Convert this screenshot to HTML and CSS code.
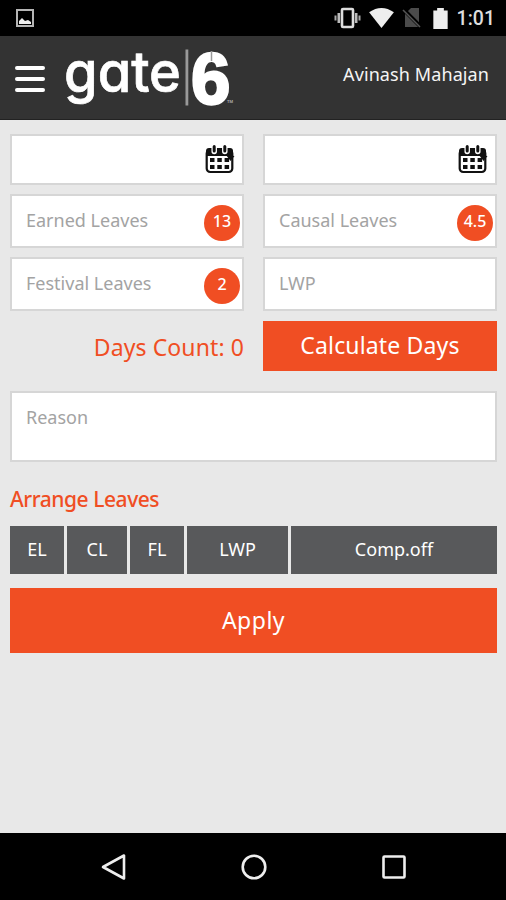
FILE: index.html
```html
<!DOCTYPE html>
<html lang="en">
  <head>
    <meta charset="utf-8">
    <title>Apply Leave</title>
    <link rel="stylesheet" href="styles.css">
  </head>
  <body>
    <div class="status-bar">
      <svg class="icon-picture" width="18" height="18" viewBox="0 0 18 18">
        <rect x="1" y="1" width="16" height="16" fill="none" stroke="#b5b5b5" stroke-width="2"/>
        <path d="M3 15v-3l3-3 3 3 3-1 3 2v2z" fill="#eee"/>
      </svg>
      <div class="status-icons">
        <svg width="27" height="22" viewBox="0 0 27 22">
          <rect x="8" y="2" width="11" height="18" rx="1" fill="none" stroke="#ddd" stroke-width="2.6"/>
          <path d="M4.8 6v10M22.2 6v10" stroke="#bbb" stroke-width="2.6"/>
          <path d="M1.5 8.500v5M25.500 8.500v5" stroke="#aaa" stroke-width="2"/>
        </svg>
        <svg class="icon-wifi" width="25" height="20" viewBox="0 0 26 21">
          <path d="M0 4.500Q13-4.500 26 4.500L13 21z" fill="#eee"/>
        </svg>
        <svg class="icon-sim" width="20" height="22" viewBox="0 0 20 22">
          <path d="M3 7l6-6h8v19H3z" fill="#4b4b4b"/>
          <path d="M1 2l18 18" stroke="#000" stroke-width="4"/>
          <path d="M1 3l17 17" stroke="#555" stroke-width="1.600"/>
        </svg>
        <svg class="icon-battery" width="15" height="21" viewBox="0 0 15 22">
          <path d="M0 2.500h4V0h7v2.500h4V22H0z" fill="#eee"/>
        </svg>
        <span class="clock">1:01</span>
      </div>
    </div>

    <header class="header">
      <div class="menu"><span></span><span></span><span></span></div>
      <svg class="logo" width="174" height="82" viewBox="-3 -9 174 82">
        <text class="logo-gate" x="-1" y="46" textLength="117" lengthAdjust="spacingAndGlyphs">gate</text>
        <rect x="120.500" y="3.500" width="2.800" height="56" fill="#999"/>
        <text class="logo-six" transform="translate(126 58) scale(.97 1)">6</text>
        <path d="M146.500 5v10" stroke="#999" stroke-width="1.500"/>
        <text class="logo-tm" x="162" y="57">TM</text>
      </svg>
      <span class="user">Avinash Mahajan</span>
    </header>

    <main class="content">
      <div class="fields">
        <div class="field date">
          <svg class="calendar" width="30" height="29" viewBox="0 0 30 29"><use href="#cal"/></svg>
        </div>
        <div class="field date">
          <svg class="calendar" width="30" height="29" viewBox="0 0 30 29">
            <g id="cal">
              <rect x="1.700" y="5" width="25.600" height="22" rx="3.500" fill="#fff" stroke="#111" stroke-width="2.200"/>
              <path d="M1 11V6q0-3 3-3h21q3 0 3 3v5z" fill="#111"/>
              <path d="M9.200 2v4.500M19.800 2v4.500" stroke="#fff" stroke-width="5.500" stroke-linecap="round"/>
              <path d="M9.200 1.500v4.500M19.800 1.500v4.500" stroke="#111" stroke-width="3" stroke-linecap="round"/>
              <path d="M5 13h4.500v4H5zM12.300 13h4.500v4h-4.500zM19.600 13h4.500v4h-4.500zM5 20h4.500v4H5zM12.300 20h4.500v4h-4.500zM19.600 20h4.500v4h-4.500z" fill="#111"/>
              <path d="M21 10l8.500 1-4 5z" fill="#111"/>
            </g>
          </svg>
        </div>
        <div class="field">Earned Leaves <span class="badge">13</span></div>
        <div class="field">Causal Leaves <span class="badge">4.5</span></div>
        <div class="field">Festival Leaves <span class="badge">2</span></div>
        <div class="field">LWP</div>
        <div class="days-count">Days Count: 0</div>
        <button class="calculate">Calculate Days</button>
      </div>

      <div class="field reason">Reason</div>

      <h2>Arrange Leaves</h2>
      <div class="types">
        <button>EL</button>
        <button>CL</button>
        <button>FL</button>
        <button>LWP</button>
        <button>Comp.off</button>
      </div>
      <button class="apply">Apply</button>
    </main>

    <nav class="nav-bar">
      <svg width="28" height="30" viewBox="0 0 28 30"><path d="M24 3.500v23L3 15z"/></svg>
      <svg width="28" height="30" viewBox="0 0 28 30"><circle cx="14" cy="15" r="11.300"/></svg>
      <svg width="28" height="30" viewBox="0 0 28 30"><rect x="3.500" y="4.500" width="21" height="21" rx="1"/></svg>
    </nav>
  </body>
</html>
```
FILE: styles.css
```css
:root {
  --orange: #f04e23;
  --bg: #e8e8e8;
  --dark: #333333;
  --grey: #58595b;
  --border: #d6d6d6;
}

* {
  box-sizing: border-box;
}

body {
  margin: 0;
  height: 900px;
  display: flex;
  flex-direction: column;
  background: var(--bg);
  font-family: "Noto Sans", "Open Sans", sans-serif;
  overflow: hidden;
}

button {
  border: none;
  padding: 0 0 2px;
  color: #fff;
  font-family: inherit;
}

/* Status bar */
.status-bar {
  height: 36px;
  padding: 0 11px 0 16px;
  background: #000;
  display: flex;
  align-items: center;
  justify-content: space-between;
}

.status-icons {
  display: flex;
  align-items: center;
}

.icon-wifi {
  margin-left: 8px;
}

.icon-sim {
  margin-left: 8px;
}

.icon-battery {
  margin-left: 11px;
}

.clock {
  margin-left: 9px;
  color: #ddd;
  font: 500 19.5px/36px Roboto, sans-serif;
  padding-top: 2px;
}

/* Header */
.header {
  height: 84px;
  padding: 0 17px 0 15px;
  background: var(--dark);
  border-bottom: 1px solid #222;
  display: flex;
  align-items: center;
}

.menu {
  display: flex;
  flex-direction: column;
  gap: 7px;
  margin-top: 3px;
}

.menu span {
  width: 30px;
  height: 4px;
  border-radius: 2px;
  background: #fff;
}

.logo {
  margin-left: 17px;
  fill: #fff;
}

.logo-gate {
  font: 500 56px Inter, sans-serif;
  font-feature-settings: "cv11";
  stroke: #fff;
  stroke-width: 0.7;
}

.logo-six {
  font: 700 73px "Liberation Sans", sans-serif;
  stroke: #fff;
  stroke-width: 2.5;
}

.logo-tm {
  font: 700 4px Roboto, sans-serif;
  fill: #aaa;
}

.user {
  margin: -8px 0 0 auto;
  color: #f5f5f5;
  font-size: 18px;
  letter-spacing: 0.1px;
}

/* Leave form */
.content {
  flex: 1;
  padding: 14px 9px 0 10px;
}

.fields {
  display: grid;
  grid-template-columns: 1fr 1fr;
  grid-template-rows: 51px 54px 54px 51px;
  gap: 9px 19px;
}

.field {
  display: flex;
  align-items: center;
  justify-content: space-between;
  padding: 0 2px 3px 14px;
  background: #fff;
  border: 2px solid var(--border);
  color: #a3a3a3;
  font-size: 18px;
}

.date {
  justify-content: flex-end;
  padding: 0 7px 0 0;
}

.badge {
  width: 36px;
  height: 36px;
  margin-top: 6px;
  border-radius: 50%;
  background: var(--orange);
  color: #fff;
  font-size: 16px;
  font-weight: 500;
  line-height: 33px;
  text-align: center;
}

.days-count {
  color: var(--orange);
  font-size: 23px;
  line-height: 55px;
  letter-spacing: 0.1px;
  text-align: right;
}

.calculate {
  margin-top: 1px;
  background: var(--orange);
  font-size: 23px;
  letter-spacing: 0.15px;
}

.reason {
  height: 71px;
  margin-top: 20px;
  padding-top: 12px;
  align-items: flex-start;
}

h2 {
  margin: 22px 0 12px;
  color: var(--orange);
  font-size: 21px;
  font-weight: 500;
  line-height: 30px;
  letter-spacing: -0.45px;
}

.types {
  display: grid;
  grid-template-columns: 54px 60px 54px 101px 1fr;
  gap: 3px;
}

.types button {
  height: 48px;
  background: var(--grey);
  font-size: 18px;
}

.apply {
  width: 100%;
  height: 65px;
  margin-top: 14px;
  background: var(--orange);
  font-size: 23px;
  letter-spacing: 0.5px;
}

/* Android navigation */
.nav-bar {
  height: 67px;
  padding: 0 98px 0 100px;
  background: #000;
  display: flex;
  align-items: center;
  justify-content: space-between;
}

.nav-bar svg {
  fill: none;
  stroke: #eee;
  stroke-width: 2.6;
  stroke-linejoin: round;
}
```
